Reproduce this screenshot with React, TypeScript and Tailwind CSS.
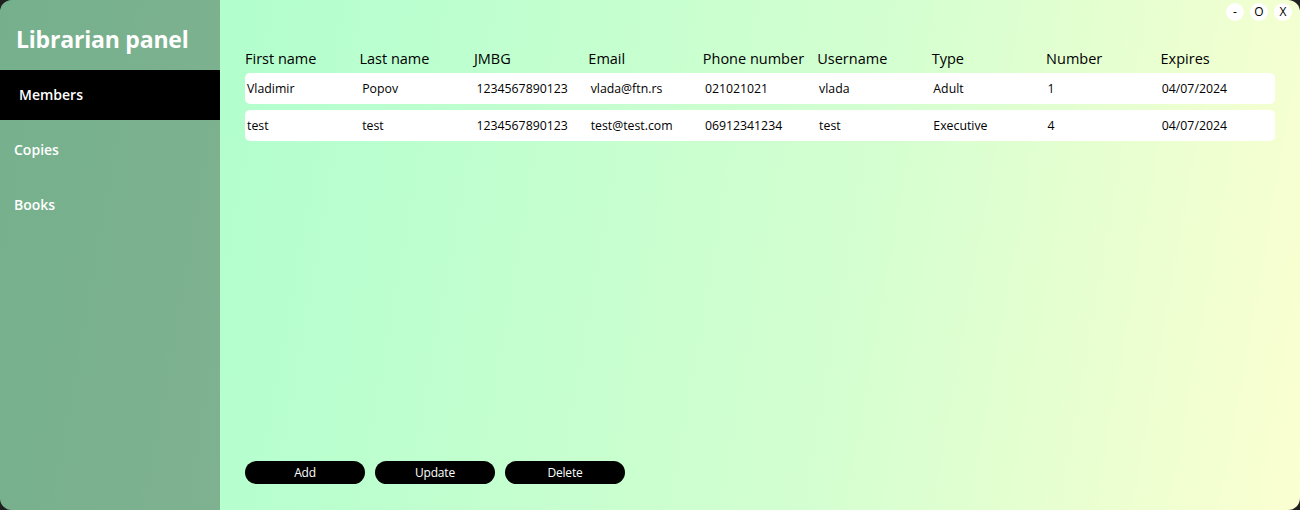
import { useState } from 'react';

const columns = ['First name', 'Last name', 'JMBG', 'Email', 'Phone number', 'Username', 'Type', 'Number', 'Expires'];

const members = [
  ['Vladimir', 'Popov', '1234567890123', 'vlada@ftn.rs', '021021021', 'vlada', 'Adult', '1', '04/07/2024'],
  ['test', 'test', '1234567890123', 'test@test.com', '06912341234', 'test', 'Executive', '4', '04/07/2024'],
];

const navItems = ['Members', 'Copies', 'Books'];

function App() {
  const [active, setActive] = useState('Members');

  return (
    <div
      className="w-[1300px] h-[510px] bg-[#202020] overflow-hidden"
      style={{ fontFamily: '"Open Sans", "Noto Sans", sans-serif' }}
    >
      <div className="relative flex h-full rounded-[12px] overflow-hidden bg-[linear-gradient(100deg,#a8fdca_0%,#bbffcf_30%,#d4ffd0_65%,#fbffd1_100%)]">
        {/* Sidebar */}
        <aside className="w-[220px] h-full bg-black/30 flex flex-col">
          <h1 className="pl-[16px] pt-[22px] h-[70px] text-[23px] font-bold text-white leading-[34px] tracking-[-0.2px]">
            Librarian panel
          </h1>
          <nav className="flex flex-col gap-[5px]">
            {navItems.map((item) => (
              <button
                key={item}
                onClick={() => setActive(item)}
                className={
                  active === item
                    ? 'h-[50px] bg-black text-white text-left pl-[19px] pb-[2px] text-[14px] font-semibold'
                    : 'h-[50px] text-white text-left pl-[14px] pb-[2px] text-[14px] font-semibold'
                }
              >
                {item}
              </button>
            ))}
          </nav>
        </aside>

        {/* Main */}
        <main className="flex-1 flex flex-col px-[25px] pt-[49px] pb-[26px]">
          <div className="grid grid-cols-9 h-[20px] items-center text-[14.5px] font-medium text-black leading-[20px]">
            {columns.map((c) => (
              <div key={c}>{c}</div>
            ))}
          </div>
          <div className="flex flex-col gap-[6px] mt-[4px]">
            {members.map((row, i) => (
              <div key={i} className="grid grid-cols-9 h-[31px] items-center bg-white rounded-[5px] pl-[2px] pt-[2px] text-[12.3px] text-black">
                {row.map((cell, j) => (
                  <div key={j} className={j === 0 ? '' : 'pl-[1px]'}>{cell}</div>
                ))}
              </div>
            ))}
          </div>
          <div className="flex-1" />
          <div className="flex gap-[10px]">
            {['Add', 'Update', 'Delete'].map((b) => (
              <button key={b} className="w-[120px] h-[23px] rounded-full bg-black text-white text-[12px] leading-[23px] tracking-[-0.2px]">
                {b}
              </button>
            ))}
          </div>
        </main>

        {/* Window controls */}
        <div className="absolute top-[3px] right-[8px] flex gap-[6px]">
          {['-', 'O', 'X'].map((c) => (
            <button key={c} className="w-[18px] h-[18px] rounded-full bg-white text-[12px] leading-[18px] text-black flex items-center justify-center">
              {c}
            </button>
          ))}
        </div>
      </div>
    </div>
  );
}

export default App;
